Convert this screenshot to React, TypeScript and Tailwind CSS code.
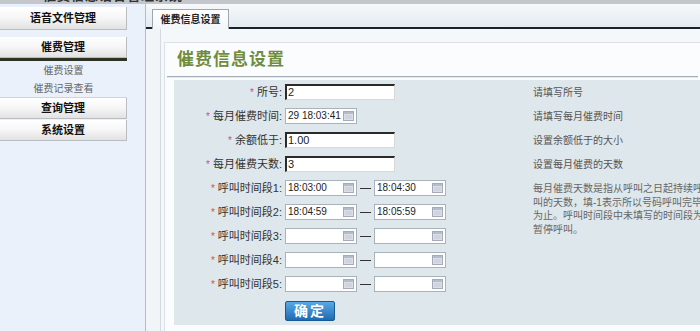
import React from "react";

const font = { fontFamily: '"Liberation Sans", "Noto Sans CJK SC", sans-serif' };

function Cal() {
  return (
    <svg width="11" height="10" viewBox="0 0 11 10" className="shrink-0">
      <rect x="0.5" y="0.5" width="10" height="9" fill="#dcdfe8" stroke="#a4aab8" />
      <rect x="1" y="1" width="9" height="2" fill="#b7bccb" />
      <line x1="2" y1="5" x2="9" y2="5" stroke="#c4c8d4" />
      <line x1="2" y1="7" x2="9" y2="7" stroke="#c4c8d4" />
    </svg>
  );
}

function TextBox({ value }: { value: string }) {
  return (
    <div className="w-[110px] h-[16px] shrink-0 bg-white border-t-2 border-l-2 border-r border-b border-t-[#2a2a2a] border-l-[#2a2a2a] border-r-[#d8d8d8] border-b-[#d8d8d8] text-[11px] leading-[13px] pl-[1px] text-[#222]">
      {value}
    </div>
  );
}

function DateBox({ value }: { value: string }) {
  return (
    <div className="w-[72px] h-[16px] shrink-0 bg-white border border-[#a9b3bb] flex items-center justify-between pl-[2px] pr-[2px] text-[10px] leading-[14px] text-[#222] whitespace-nowrap overflow-hidden">
      <span>{value}</span>
      <Cal />
    </div>
  );
}

function Label({ text }: { text: string }) {
  return (
    <div className="w-[108px] shrink-0 text-right text-[11px] text-[#333] leading-[14px] whitespace-nowrap">
      <span className="text-[#d9534f] text-[10px] mr-[3px]">*</span>
      {text}
    </div>
  );
}

function Row({
  label,
  field,
  hint,
}: {
  label: string;
  field: React.ReactNode;
  hint?: React.ReactNode;
}) {
  return (
    <div className="flex items-center h-[24px]">
      <Label text={label} />
      <div className="w-[251px] shrink-0 pl-[3px] flex items-center">{field}</div>
      <div className="flex-1 text-[10px] text-[#555] leading-[13px] whitespace-nowrap">{hint}</div>
    </div>
  );
}

function Range({ a, b }: { a: string; b: string }) {
  return (
    <div className="flex items-center">
      <DateBox value={a} />
      <div className="w-[17px] flex justify-center">
        <div className="w-[11px] h-[1px] bg-[#333]" />
      </div>
      <DateBox value={b} />
    </div>
  );
}

function SideBtn({ text, h }: { text: string; h: string }) {
  return (
    <div
      className={`w-[127px] ${h} flex items-center justify-center text-[11px] font-bold text-[#111] bg-gradient-to-b from-[#ffffff] via-[#f6f6f6] to-[#e2e2e2] border-r border-b border-[#b9bcc0]`}
    >
      {text}
    </div>
  );
}

export default function App() {
  return (
    <div className="w-[700px] h-[331px] overflow-hidden bg-[#eef3f8] flex flex-col" style={font}>
      {/* top strip */}
      <div className="h-[4px] bg-[#c3c7cb] overflow-hidden shrink-0">
        <div className="ml-[43px] mt-[-12px] text-[13px] leading-[16px] font-bold text-[#333] tracking-[1px] whitespace-nowrap">
          催费信息语音管理系统
        </div>
      </div>
      <div className="flex flex-1 min-h-0">
        {/* sidebar */}
        <div className="w-[145px] shrink-0 bg-[#ebf1fa] pt-[3px]">
          <SideBtn text="语音文件管理" h="h-[23px]" />
          <div className="h-[7px]" />
          <SideBtn text="催费管理" h="h-[21px]" />
          <div className="w-[127px] h-[3px] bg-[#2c3324]" />
          <div className="w-[127px] h-[18px] flex items-center justify-center text-[10px] text-[#666]">
            催费设置
          </div>
          <div className="w-[127px] h-[19px] flex items-center justify-center text-[10px] text-[#666] border-b border-[#cfd4da]">
            催费记录查看
          </div>
          <SideBtn text="查询管理" h="h-[21px]" />
          <div className="h-[1px]" />
          <SideBtn text="系统设置" h="h-[21px]" />
        </div>
        {/* right side */}
        <div className="flex-1 flex flex-col border-l border-[#b4bcc4] min-w-0">
          {/* tab bar */}
          <div className="h-[25px] shrink-0 bg-gradient-to-b from-[#f7f9fb] to-[#e3eaf0] border-b-2 border-[#17222b] flex items-end pl-[6px]">
            <div className="w-[77px] h-[20px] mb-[-2px] bg-gradient-to-b from-[#ffffff] to-[#f2f5f8] border-t border-l border-r border-[#9ea7b0] flex items-center justify-center text-[10px] font-bold text-[#222]">
              催费信息设置
            </div>
          </div>
          {/* body */}
          <div className="flex flex-1 min-h-0">
            <div className="w-[15px] shrink-0 bg-[#f1f5f8] border-r border-[#d3dae0]" />
            <div className="flex-1 bg-[#f5f8fa] pt-[13px] pl-[3px] min-w-0">
              <div className="bg-[#fbfcfd] border-t border-l border-[#dce2e7] h-full">
                <div className="h-[34px] mx-[2px] border-b border-[#a4adb5] shadow-[0_1px_0_#e6eaee] flex items-center pl-[10px]">
                  <span className="text-[17px] font-bold text-[#6f8d3d] tracking-[1px] leading-[22px]">
                    催费信息设置
                  </span>
                </div>
                <div className="ml-[9px] mt-[3px] h-[245px] bg-[#dee7ec]">
                  <Row label="所号:" field={<TextBox value="2" />} hint="请填写所号" />
                  <Row label="每月催费时间:" field={<DateBox value="29 18:03:41" />} hint="请填写每月催费时间" />
                  <Row label="余额低于:" field={<TextBox value="1.00" />} hint="设置余额低于的大小" />
                  <Row label="每月催费天数:" field={<TextBox value="3" />} hint="设置每月催费的天数" />
                  <div className="flex h-[24px] items-center">
                    <Label text="呼叫时间段1:" />
                    <div className="w-[251px] shrink-0 pl-[3px] flex items-center">
                      <Range a="18:03:00" b="18:04:30" />
                    </div>
                    <div className="self-start pt-[6px] h-[24px] shrink-0">
                      <p className="w-[172px] text-[10px] leading-[13.5px] text-[#666]">
                        每月催费天数是指从呼叫之日起持续呼叫的天数，填-1表示所以号码呼叫完毕为止。呼叫时间段中未填写的时间段为暂停呼叫。
                      </p>
                    </div>
                  </div>
                  <Row label="呼叫时间段2:" field={<Range a="18:04:59" b="18:05:59" />} />
                  <Row label="呼叫时间段3:" field={<Range a="" b="" />} />
                  <Row label="呼叫时间段4:" field={<Range a="" b="" />} />
                  <Row label="呼叫时间段5:" field={<Range a="" b="" />} />
                  <div className="pl-[111px] pt-[5px]">
                    <div className="w-[50px] h-[20px] rounded-[2px] bg-gradient-to-b from-[#5aa8e4] to-[#1c6cb2] border border-[#195a92] flex items-center justify-center text-[14px] font-bold text-white tracking-[2px]">
                      确定
                    </div>
                  </div>
                </div>
              </div>
            </div>
          </div>
        </div>
      </div>
    </div>
  );
}
